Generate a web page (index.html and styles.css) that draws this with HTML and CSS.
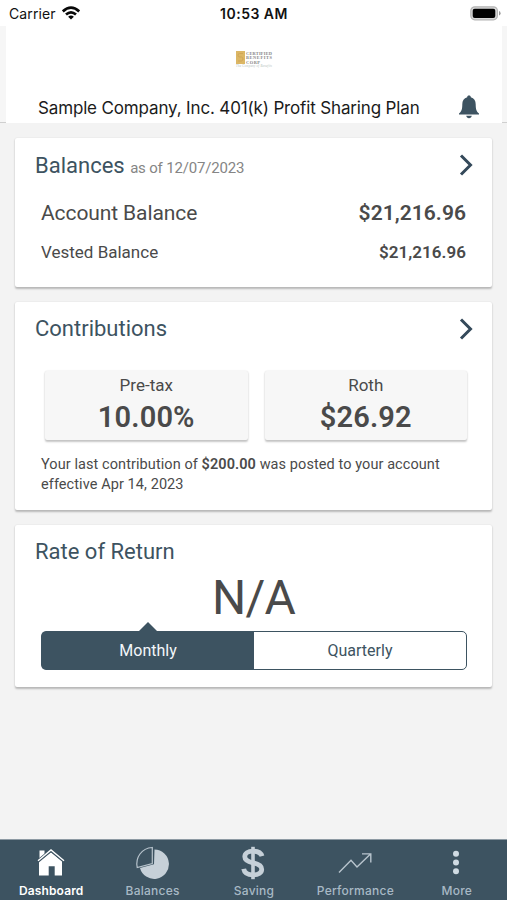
FILE: index.html
```html
<!DOCTYPE html>
<html lang="en">
<head>
<meta charset="utf-8">
<title>Dashboard</title>
<link rel="stylesheet" href="styles.css">
</head>
<body>
<div class="app">
  <div class="status">
    <div class="carrier"><span class="carrier-name">Carrier</span>
      <svg class="wifi" width="18" height="14" viewBox="0 0 18 14"><g fill="none" stroke="#080808" stroke-width="2.7"><path d="M.8 5.400Q9-2.200 17.200 5.400"/><path d="M4 8.600Q9 4.200 14 8.600"/></g><path d="M9 13.600L6.100 10.700Q9 8.400 11.900 10.700Z" fill="#080808"/></svg>
    </div>
    <div class="clock">10:53 AM</div>
    <svg class="battery" width="31" height="15" viewBox="0 0 31 15"><rect x=".8" y=".8" width="26.6" height="13" rx="4" fill="#d8d8d8" stroke="#b4b4b4" stroke-width="1.2"/><rect x="2.7" y="2.7" width="22.6" height="9.2" rx="2" fill="#000"/><path d="M29 5q1.600.4 1.600 2.300T29 9.600z" fill="#999"/></svg>
  </div>
  <div class="header-band">
  <header class="header">
    <svg class="logo" width="38" height="18" viewBox="0 0 38 18"><rect x="1" y="1" width="9" height="13" fill="#dcb765"/><path d="M8 3.500H4.500Q3 3.500 3 5.200T4.800 7H6.500Q8 7.300 8 9T6.300 11H3" fill="none" stroke="#cfa658"/><g class="logo-name"><text x="11" y="5" textLength="26">CERTIFIED</text><text x="11" y="9.400" textLength="26">BENEFITS</text><text x="11" y="13.800" textLength="14">CORP</text></g><text class="logo-tag" x="1" y="17.400" textLength="36">The Company of Benefits</text></svg>
    <div class="plan">
      <span class="plan-name">Sample Company, Inc. 401(k) Profit Sharing Plan</span>
      <svg class="bell" width="22" height="24" viewBox="0 0 22 24"><path d="M11 .5c1.200 0 1.800.7 1.800 1.700 3.300.9 4.900 3.500 4.900 7.100 0 5.100.8 7.400 3.300 9.200v1H1v-1c2.500-1.800 3.300-4.100 3.300-9.200 0-3.600 1.600-6.200 4.900-7.100C9.200 1.200 9.800.5 11 .5zM8.200 20.700h5.600c-.3 1.600-1.300 2.500-2.800 2.500s-2.500-.9-2.800-2.500z" fill="#3d5361"/></svg>
    </div>
  </header>
  </div>
  <main class="cards">
    <section class="card balances">
      <div class="head"><h2>Balances <small>as of 12/07/2023</small></h2>
        <svg class="chev" width="14" height="22" viewBox="0 0 14 22"><path d="M2 1.500L11.500 11 2 20.500" fill="none" stroke="#34495a" stroke-width="3"/></svg></div>
      <div class="row row-big"><span>Account Balance</span><b>$21,216.96</b></div>
      <div class="row"><span>Vested Balance</span><b>$21,216.96</b></div>
    </section>
    <section class="card contributions">
      <div class="head"><h2>Contributions</h2>
        <svg class="chev" width="14" height="22" viewBox="0 0 14 22"><path d="M2 1.500L11.500 11 2 20.500" fill="none" stroke="#34495a" stroke-width="3"/></svg></div>
      <div class="tiles">
        <div class="tile"><span class="tile-label">Pre-tax</span><b class="tile-value">10.00%</b></div>
        <div class="tile"><span class="tile-label">Roth</span><b class="tile-value">$26.92</b></div>
      </div>
      <p class="note">Your last contribution of <b>$200.00</b> was posted to your account<br>effective Apr 14, 2023</p>
    </section>
    <section class="card return">
      <div class="head"><h2>Rate of Return</h2></div>
      <div class="rate">N/A</div>
      <div class="segment"><div class="seg active">Monthly</div><div class="seg">Quarterly</div></div>
    </section>
  </main>
  <nav class="tabs">
    <div class="tab current"><svg width="34" height="34" viewBox="0 0 34 34"><path d="M5.500 4.500h5v3.800l-5 4.300zM17 6.300l11 9v14.200h-7.300v-9.300h-6v9.300H5V15.300z" fill="#fff"/><path d="M3.500 15.500L17 4.300l13.500 11.200" fill="none" stroke="#3d5361" stroke-width="3"/><path d="M4 14.800L17 3.900l13 10.900" fill="none" stroke="#fff" stroke-width="1.400"/></svg><span>Dashboard</span></div>
    <div class="tab"><svg width="34" height="34" viewBox="0 0 34 34"><path d="M19.500 3.500A14.700 14.700 0 1 1 5 21.900L19 18.200z" fill="#c6d0d8"/><path d="M17.300 1.500C6.500 2.200.2 11.500 2.200 21.500L17.300 17.500z" fill="#3d5361" stroke="#b8c4cd" stroke-width="1.200"/></svg><span>Balances</span></div>
    <div class="tab"><svg width="34" height="34" viewBox="0 0 34 34"><path d="M17 .8v32.400" fill="none" stroke="#c6d0d8" stroke-width="3.600"/><path d="M26 10.200C25 6.700 21.500 5.200 17 5.200c-5 0-8.200 2.100-8.200 5.500 0 3.800 3.300 5 8.200 6.100 5.500 1.200 8.700 2.600 8.700 6.400S22 28.900 17 28.900s-8.600-2-9.300-6" fill="none" stroke="#c6d0d8" stroke-width="4.800"/></svg><span>Saving</span></div>
    <div class="tab"><svg width="34" height="34" viewBox="0 0 34 34"><path d="M1 26.500l12-12.200 6 6.700L32.500 8M24 7.900h8.800v8.600" fill="none" stroke="#b8c4cd" stroke-width="1.400"/></svg><span>Performance</span></div>
    <div class="tab"><svg width="34" height="34" viewBox="0 0 34 34" fill="#d0dbe3"><circle cx="17" cy="7.800" r="3"/><circle cx="17" cy="16.500" r="3"/><circle cx="17" cy="25.200" r="3"/></svg><span>More</span></div>
  </nav>
</div>
</body>
</html>
```

FILE: styles.css
```css
* { box-sizing: border-box; }
body { margin: 0; background: #f3f3f3; font-family: Roboto, sans-serif; color: #4a4a4a; }
.app { width: 507px; height: 900px; display: flex; flex-direction: column; background: #f3f3f3; }
.status { height: 26px; display: grid; grid-template-columns: 1fr auto 1fr; align-items: center; padding: 0 6px 0 9px; background: #fff; font-family: Inter, sans-serif; color: #111; }
.carrier { display: flex; align-items: center; gap: 6px; font-size: 14px; line-height: 26px; padding-top: 1px; }
.carrier-name { letter-spacing: .1px; }
.wifi { margin-top: -3px; }
.clock { font-size: 14px; font-weight: 600; letter-spacing: .5px; line-height: 26px; padding: 1px 2px 0 0; }
.battery { justify-self: end; margin-top: -1px; }
.header-band { height: 97px; padding: 0 5px 0 6px; border-bottom: 1px solid #cfcfcf; background: #f6f6f6; }
.header { height: 97px; background: #fff; display: flex; flex-direction: column; justify-content: space-between; align-items: center; padding-top: 24px; }
.logo { flex: none; }
.logo-name { font: 700 4.400px "Liberation Serif", serif; fill: #858585; }
.logo-tag { font: italic 3px "Liberation Serif", serif; fill: #aebbb6; }
.plan { width: 100%; display: flex; justify-content: space-between; align-items: center; padding: 0 22px 0 32px; height: 32px; }
.plan-name { font: 400 17px/24px Inter, sans-serif; letter-spacing: -.15px; color: #1b1b1b; white-space: nowrap; padding-top: 1px; }
.cards { flex: 1; display: flex; flex-direction: column; gap: 15px; padding: 15px 15px 0; }
.card { background: #fff; border-radius: 2px; box-shadow: 0 1.5px 2px rgba(0,0,0,.24), 0 0 2px rgba(0,0,0,.06); padding: 14px 20px 0; }
.balances { height: 149px; }
.contributions { height: 208px; }
.return { height: 162px; }
.head { display: flex; justify-content: space-between; height: 28px; align-items: center; }
.chev { margin: -2px -1px 0 0; }
h2 { margin: 0; font-size: 22px; line-height: 28px; font-weight: 400; color: #3d5361; white-space: nowrap; }
.contributions h2, .return h2 { margin-top: -2px; }
.balances h2 { margin-top: 1px; }
small { font-size: 15px; letter-spacing: -.18px; color: #858585; }
.row { display: flex; justify-content: space-between; align-items: center; margin: 0 6px; height: 36px; font-size: 17px; }
.row-big { height: 42px; margin-top: 12px; font-size: 21px; letter-spacing: -.1px; }
.row b { letter-spacing: .05px; }
.row b, .tile b, .note b { font-weight: 600; }
.tiles { display: flex; gap: 17px; margin: 27px 5px 0 10px; }
.tile { flex: 1; height: 69px; display: flex; flex-direction: column; align-items: center; background: #f7f7f7; border-radius: 2px; box-shadow: 0 1.5px 2px rgba(0,0,0,.22), 0 0 2px rgba(0,0,0,.08); }
.tile-label { font-size: 17px; line-height: 20px; margin-top: 4px; }
.tile-value { font-size: 29px; letter-spacing: .15px; line-height: 34px; margin-top: 5px; }
.note { margin: 15px 6px 0; font-size: 14.500px; letter-spacing: .08px; line-height: 19.500px; white-space: nowrap; }
.rate { font-size: 48px; letter-spacing: -.8px; line-height: 62px; height: 64px; text-align: center; }
.segment { display: flex; height: 39px; margin: 0 5px 0 6px; border: 1.500px solid #3d5361; border-radius: 5px; }
.seg { flex: 1; text-align: center; font-size: 16px; line-height: 38px; color: #3d5361; }
.active { position: relative; background: #3d5361; color: #f3f7fa; border-radius: 2px 0 0 2px; }
.active::before { content: ""; position: absolute; left: 50%; top: -10px; margin-left: -9px; border: 9px solid transparent; border-top: 0; border-bottom: 9px solid #3d5361; }
.tabs { height: 61px; display: grid; grid-template-columns: repeat(5, 1fr); background: #3d5361; border-top: 1px solid #8d9aa3; }
.tab { display: flex; flex-direction: column; align-items: center; padding-top: 6px; font: 500 12px/16px Inter, sans-serif; letter-spacing: .24px; color: #a8b9c5; }
.tab svg { flex: none; }
.tab span { margin: 3px 0 0 1px; }
.current { color: #fff; font-weight: 600; letter-spacing: .12px; }
```
